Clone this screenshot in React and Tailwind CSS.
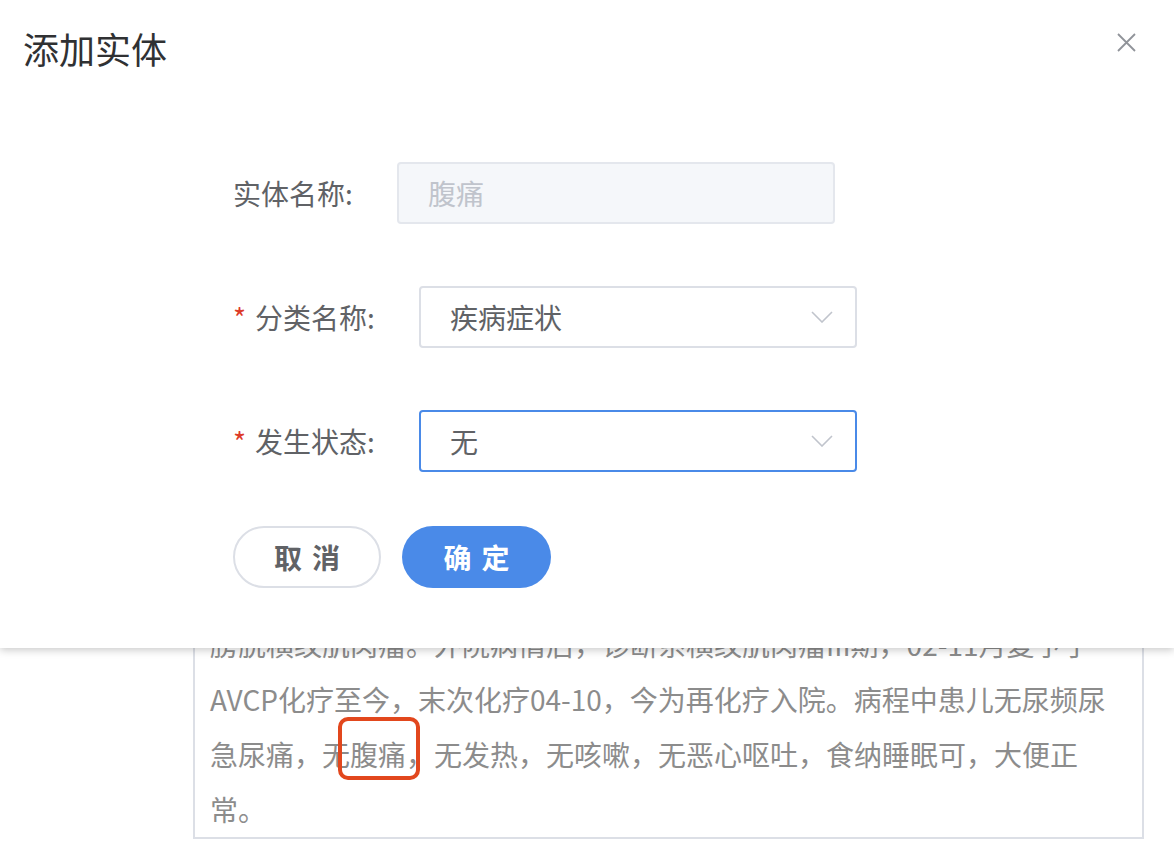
const FONT = { fontFamily: '"Noto Sans CJK SC", "Noto Sans", sans-serif' };

function Chevron() {
  return (
    <svg width="22" height="12" viewBox="0 0 22 12" fill="none" className="shrink-0">
      <path d="M1 1l10 10L21 1" stroke="#c0c4cc" strokeWidth="1.6" />
    </svg>
  );
}

function FieldBox({ value, muted, focused, disabled, select }) {
  let box = 'border-[#dcdfe6] bg-white';
  if (disabled) box = 'border-[#e4e7ed] bg-[#f5f7fa]';
  if (focused) box = 'border-[#4a8ae8] bg-white';
  return (
    <div
      className={`w-[438px] h-[62px] rounded-[4px] border-2 ${box} flex items-center justify-between pl-[29px] pr-[22px]`}
    >
      <span className={`text-[28px] leading-[28px] ${muted ? 'text-[#c0c4cc]' : 'text-[#606266]'}`}>
        {value}
      </span>
      {select && <Chevron />}
    </div>
  );
}

function Label({ text, required, width }) {
  return (
    <div className={`${width} shrink-0 flex items-center text-[28px] leading-[28px] text-[#606266]`}>
      {required && <span className="text-[#dd3b2a] mr-[9px]">*</span>}
      <span>{text}</span>
    </div>
  );
}

export default function App() {
  return (
    <div className="relative w-full min-h-[864px] bg-white overflow-hidden" style={FONT}>
      {/* background record text */}
      <div className="pt-[560px]">
        <div className="ml-[193px] w-[951px] border-2 border-[#dcdfe6] pl-[15px] pt-[55px] text-[28px] leading-[55px] text-[#8c8c8c] whitespace-nowrap">
          <div>膀胱横纹肌肉瘤。外院病情后，诊断系横纹肌肉瘤III期，02-11月复予于</div>
          <div>AVCP化疗至今，末次化疗04-10，今为再化疗入院。病程中患儿无尿频尿</div>
          <div>
            急尿痛，无
            <span className="relative">
              腹痛
              <span className="absolute -left-[12px] -right-[14px] -top-[17px] -bottom-[6px] border-[4px] border-[#e2471d] rounded-[10px]" />
            </span>
            ，无发热，无咳嗽，无恶心呕吐，食纳睡眠可，大便正
          </div>
          <div>常。</div>
        </div>
      </div>

      {/* dialog */}
      <div className="absolute left-0 right-0 top-0 h-[648px] bg-white shadow-[0_2px_8px_rgba(0,0,0,0.22)] z-10">
        <div className="pt-[30px] pl-[23px] text-[36px] leading-[36px] text-[#303133]">添加实体</div>
        <button className="absolute top-[33px] right-[38px] w-[19px] h-[19px]">
          <svg width="19" height="19" viewBox="0 0 19 19" fill="none">
            <path d="M1 1l17 17M18 1L1 18" stroke="#909399" strokeWidth="1.8" />
          </svg>
        </button>

        <div className="ml-[233px] mt-[96px] flex flex-col">
          <div className="flex items-center h-[62px]">
            <Label text="实体名称:" width="w-[164px]" />
            <FieldBox value="腹痛" muted disabled />
          </div>
          <div className="flex items-center h-[62px] mt-[62px]">
            <Label text="分类名称:" required width="w-[186px]" />
            <FieldBox value="疾病症状" select />
          </div>
          <div className="flex items-center h-[62px] mt-[62px]">
            <Label text="发生状态:" required width="w-[186px]" />
            <FieldBox value="无" select focused />
          </div>
          <div className="flex items-center gap-[21px] mt-[54px]">
            <button className="w-[148px] h-[62px] rounded-full border-2 border-[#dcdfe6] bg-white text-[28px] font-bold text-[#606266] tracking-[10px] pl-[10px]">
              取消
            </button>
            <button className="w-[149px] h-[62px] rounded-full bg-[#4a8ae8] text-[28px] font-bold text-white tracking-[10px] pl-[10px]">
              确定
            </button>
          </div>
        </div>
      </div>
    </div>
  );
}
